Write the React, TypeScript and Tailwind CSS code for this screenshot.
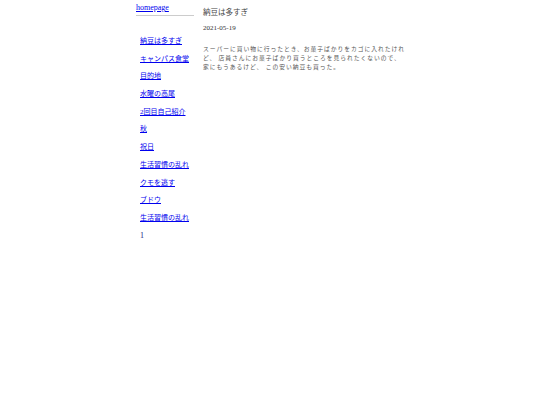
export default function App() {
  const links = [
    '納豆は多すぎ',
    'キャンパス食堂',
    '目的地',
    '水曜の高尾',
    '2回目自己紹介',
    '秋',
    '祝日',
    '生活習慣の乱れ',
    'クモを逃す',
    'ブドウ',
    '生活習慣の乱れ',
  ];

  return (
    <div className="min-h-screen bg-white text-[8px] leading-[10px] font-['Liberation_Serif','Noto_Sans_CJK_JP',serif]">
      <div className="mx-auto flex w-[268px]">
        {/* sidebar */}
        <div className="w-[58px] shrink-0">
          <div className="border-b border-[#cccccc] pt-[3px] pb-[2px]">
            <a href="#" className="text-[8px] leading-[10px] text-[#0000ee] underline">
              homepage
            </a>
          </div>
          <ul className="pt-[20px] pl-[4px]">
            {links.map((t, i) => (
              <li key={i} className="h-[17.7px] text-[7px] leading-[10px]">
                <a href="#" className="whitespace-nowrap text-[#0000ee] underline">
                  {t}
                </a>
              </li>
            ))}
            <li className="text-[8px] leading-[10px]">
              <a href="#" className="text-[#1a1a80]">1</a>
            </li>
          </ul>
        </div>

        {/* main */}
        <div className="ml-[9px] flex-1 pt-[8px] text-[#444444]">
          <h1 className="text-[7.5px] leading-[10px]">納豆は多すぎ</h1>
          <p className="mt-[5px] text-[7px] leading-[10px] text-[#333333]">2021-05-19</p>
          <p className="mt-[12px] w-[204px] text-[5.8px] leading-[9px] tracking-[0.95px] text-[#555555]">
            スーパーに買い物に行ったとき、お菓子ばかりをカゴに入れたけれど、 店員さんにお菓子ばかり買うところを見られたくないので、
            <br />
            家にもうあるけど、 この安い納豆も買った。
          </p>
        </div>
      </div>
    </div>
  );
}
